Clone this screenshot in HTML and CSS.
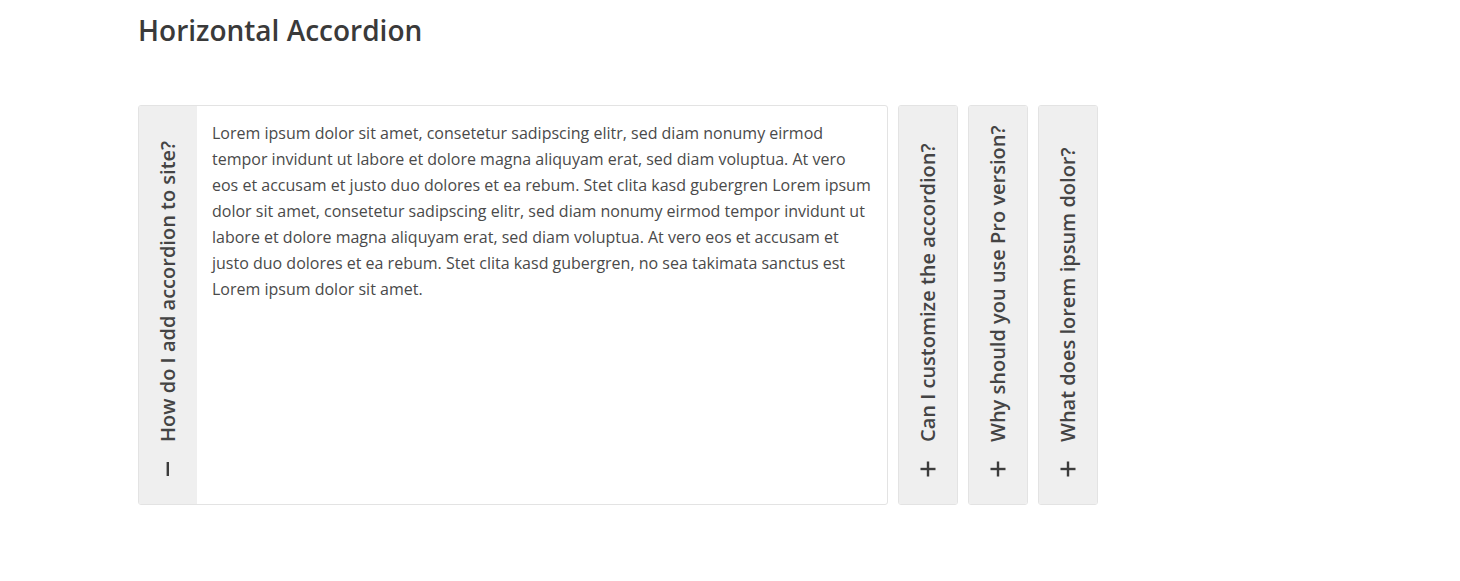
FILE: index.html
```html
<!DOCTYPE html>
<html lang="en">
<head>
<meta charset="utf-8">
<title>Horizontal Accordion</title>
<link rel="stylesheet" href="styles.css">
</head>
<body>
<div class="page">
  <h1 class="title">Horizontal Accordion</h1>
  <div class="accordion">
    <div class="item open">
      <div class="tab">
        <svg class="icon" width="16" height="16" viewBox="0 0 16 16"><rect x="7" y="1" width="2.4" height="14" fill="#3c3c3c"/></svg>
        <span class="label">How do I add accordion to site?</span>
      </div>
      <div class="content">
        <p>Lorem ipsum dolor sit amet, consetetur sadipscing elitr, sed diam nonumy eirmod tempor invidunt ut labore et dolore magna aliquyam erat, sed diam voluptua. At vero eos et accusam et justo duo dolores et ea rebum. Stet clita kasd gubergren Lorem ipsum dolor sit amet, consetetur sadipscing elitr, sed diam nonumy eirmod tempor invidunt ut labore et dolore magna aliquyam erat, sed diam voluptua. At vero eos et accusam et justo duo dolores et ea rebum. Stet clita kasd gubergren, no sea takimata sanctus est Lorem ipsum dolor sit amet.</p>
      </div>
    </div>
    <div class="item">
      <div class="tab">
        <svg class="icon" width="16" height="16" viewBox="0 0 16 16"><rect x="6.8" y="0.5" width="2.4" height="15" fill="#3c3c3c"/><rect x="0.5" y="6.8" width="15" height="2.4" fill="#3c3c3c"/></svg>
        <span class="label">Can I customize the accordion?</span>
      </div>
    </div>
    <div class="item">
      <div class="tab">
        <svg class="icon" width="16" height="16" viewBox="0 0 16 16"><rect x="6.8" y="0.5" width="2.4" height="15" fill="#3c3c3c"/><rect x="0.5" y="6.8" width="15" height="2.4" fill="#3c3c3c"/></svg>
        <span class="label">Why should you use Pro version?</span>
      </div>
    </div>
    <div class="item">
      <div class="tab">
        <svg class="icon" width="16" height="16" viewBox="0 0 16 16"><rect x="6.8" y="0.5" width="2.4" height="15" fill="#3c3c3c"/><rect x="0.5" y="6.8" width="15" height="2.4" fill="#3c3c3c"/></svg>
        <span class="label">What does lorem ipsum dolor?</span>
      </div>
    </div>
  </div>
</div>
</body>
</html>
```
FILE: styles.css
```css
* { box-sizing: border-box; }
html, body { margin: 0; padding: 0; background: #fff; }
body { font-family: "Open Sans", "Liberation Sans", sans-serif; color: #4a4a4a; }
.page { padding: 12px 0 0 138px; }
.title {
  margin: 0;
  font-size: 28px;
  line-height: 36px;
  font-weight: 600;
  color: #3a3a3a;
}
.accordion {
  margin-top: 57px;
  display: flex;
  gap: 10px;
  height: 400px;
}
.item {
  display: flex;
  border: 1px solid #e3e3e3;
  border-radius: 3px;
  background: #fff;
  overflow: hidden;
}
.item.open { width: 750px; }
.tab {
  width: 58px;
  flex: none;
  background: #efefef;
  writing-mode: vertical-rl;
  transform: rotate(180deg);
  display: flex;
  align-items: center;
  padding-top: 27px;
}
.icon { flex: none; display: block; }
.label {
  margin-top: 19px;
  font-size: 20px;
  font-weight: 600;
  color: #444;
  white-space: nowrap;
  line-height: 26px;
}
.content {
  flex: 1;
  padding: 14px 15px 15px 15px;
}
.content p {
  margin: 0;
  font-size: 16px;
  line-height: 26px;
  color: #4a4a4a;
}
```
